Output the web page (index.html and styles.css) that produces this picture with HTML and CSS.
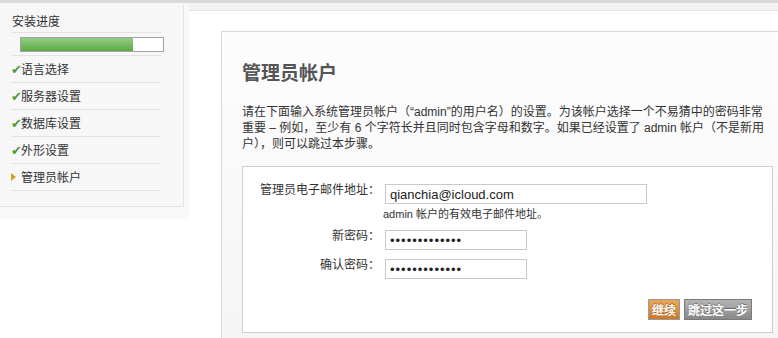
FILE: index.html
```html
<!DOCTYPE html>
<html lang="zh-CN">
<head>
  <meta charset="UTF-8">
  <title>安装 - 管理员帐户</title>
  <link rel="stylesheet" href="styles.css">
</head>
<body>
  <div class="topbar"></div>
  <div class="page">
    <div class="sidebar">
      <div class="steps">
        <div class="steps-title">安装进度</div>
        <div class="progress-row">
          <div class="progress"><div class="progress-fill" style="width: 79%"></div></div>
        </div>
        <ul class="step-list">
          <li class="step done">语言选择</li>
          <li class="step done">服务器设置</li>
          <li class="step done">数据库设置</li>
          <li class="step done">外形设置</li>
          <li class="step current">管理员帐户</li>
        </ul>
      </div>
    </div>

    <div class="main">
      <div class="main-panel">
        <div class="content">
          <h1>管理员帐户</h1>
          <p class="intro">请在下面输入系统管理员帐户（“admin”的用户名）的设置。为该帐户选择一个不易猜中的密码非常重要 – 例如，至少有 6 个字符长并且同时包含字母和数字。如果已经设置了 admin 帐户（不是新用户），则可以跳过本步骤。</p>

          <form class="account-form">
            <div class="form-row">
              <label class="form-label">管理员电子邮件地址：</label>
              <div class="form-field">
                <input type="text" class="input input-wide" value="qianchia@icloud.com">
                <div class="hint">admin 帐户的有效电子邮件地址。</div>
              </div>
            </div>
            <div class="form-row">
              <label class="form-label">新密码：</label>
              <div class="form-field">
                <input type="password" class="input input-short" value="abcdefghijklm">
              </div>
            </div>
            <div class="form-row">
              <label class="form-label">确认密码：</label>
              <div class="form-field">
                <input type="password" class="input input-short" value="abcdefghijklm">
              </div>
            </div>
            <div class="actions">
              <button type="button" class="btn btn-continue">继续</button>
              <button type="button" class="btn btn-skip">跳过这一步</button>
            </div>
          </form>
        </div>
      </div>
    </div>
  </div>
</body>
</html>
```

FILE: styles.css
```css
html, body {
  margin: 0;
  overflow: hidden;
}
body {
  font-family: "Liberation Sans", "Noto Sans CJK SC", sans-serif;
  font-size: 12px;
  color: #333;
  background-color: #fff;
}
.topbar {
  height: 3px;
  background-color: #d9d9d9;
}
.page {
  display: flex;
}

/* Sidebar with install steps */
.sidebar {
  flex: none;
  width: 189px;
  height: 216px;
  background-color: #f8f8f8;
}
.steps {
  width: 172px;
  margin-top: 2px;
  padding: 7px 0 15px 11px;
  background-color: #f7f7f7;
  border-right: 1px solid #e2e2e2;
  border-bottom: 1px solid #e2e2e2;
}
.steps-title {
  width: 149px;
  padding-left: 1px;
  line-height: 20px;
  border-bottom: 1px solid #e2e2e2;
}
.progress-row {
  width: 141px;
  height: 15px;
  padding: 4px 0 3px 9px;
  border-bottom: 1px solid #e2e2e2;
}
.progress {
  box-sizing: border-box;
  width: 144px;
  height: 15px;
  border: 1px solid #a2a2a2;
  background-color: #fff;
}
.progress-fill {
  height: 100%;
  background: linear-gradient(#94cd84, #5caa44);
}
.step-list {
  list-style: none;
  margin: 0;
  padding: 0;
}
.step {
  position: relative;
  width: 140px;
  padding: 6px 0 4px 10px;
  line-height: 16px;
  border-bottom: 1px solid #e2e2e2;
}
.step.done::before {
  content: "✔";
  position: absolute;
  left: 0;
  top: 6px;
  font-family: "DejaVu Sans", sans-serif;
  font-size: 13px;
  line-height: 16px;
  color: #4b9c34;
}
.step.current::before {
  content: "";
  position: absolute;
  left: 0;
  top: 9px;
  border-left: 5px solid #d6a11e;
  border-top: 4px solid transparent;
  border-bottom: 4px solid transparent;
}

/* Main area */
.main {
  flex: 1;
  min-width: 0;
  padding-top: 7px;
  background-color: #f3f3f3;
  overflow: hidden;
}
.main-panel {
  height: 400px;
  padding: 20px 0 0 32px;
  background-color: #fff;
  border-top: 1px solid #e4e4e4;
}
.content {
  width: 534px;
  height: 400px;
  padding: 30px 20px 0 20px;
  border: 1px solid #dadada;
  background: linear-gradient(#fdfdfd, #f2f2f2);
}
h1 {
  margin: 0;
  font-size: 19px;
  line-height: 24px;
  color: #555;
}
.intro {
  width: 528px;
  margin: 18px 0 14px;
  line-height: 16px;
}

.account-form {
  box-sizing: border-box;
  width: 531px;
  padding: 17px 20px 12px 7px;
  border: 1px solid #cfcfcf;
  background-color: #fff;
}
.form-row {
  display: flex;
  gap: 5px;
  margin-bottom: 9px;
}
.form-label {
  width: 130px;
  text-align: right;
  line-height: 12px;
}
.input {
  box-sizing: border-box;
  display: block;
  height: 20px;
  margin: 0;
  padding: 0 4px;
  border: 1px solid #c9c9c9;
  font-family: "Liberation Sans", sans-serif;
  font-size: 13px;
  color: #222;
  outline: none;
}
.input-wide {
  width: 262px;
}
.input-short {
  width: 142px;
  letter-spacing: 1px;
}
.hint {
  margin: 3px 0 0 -2px;
  font-size: 11px;
  line-height: 14px;
}
.actions {
  display: flex;
  justify-content: flex-end;
  gap: 4px;
  margin-top: 20px;
}
.btn {
  height: 21px;
  padding: 0 3px;
  border: 1px solid #888;
  font-family: "Liberation Sans", "Noto Sans CJK SC", sans-serif;
  font-size: 12px;
  font-weight: bold;
  color: #fff;
  text-shadow: 0 -1px 0 rgba(0, 0, 0, 0.35);
  cursor: pointer;
}
.btn-continue {
  background: linear-gradient(#eaa55a, #c97a25);
  border-color: #999;
}
.btn-skip {
  background: linear-gradient(#b4b4b4, #888);
  border-color: #7a7a7a;
}
```
